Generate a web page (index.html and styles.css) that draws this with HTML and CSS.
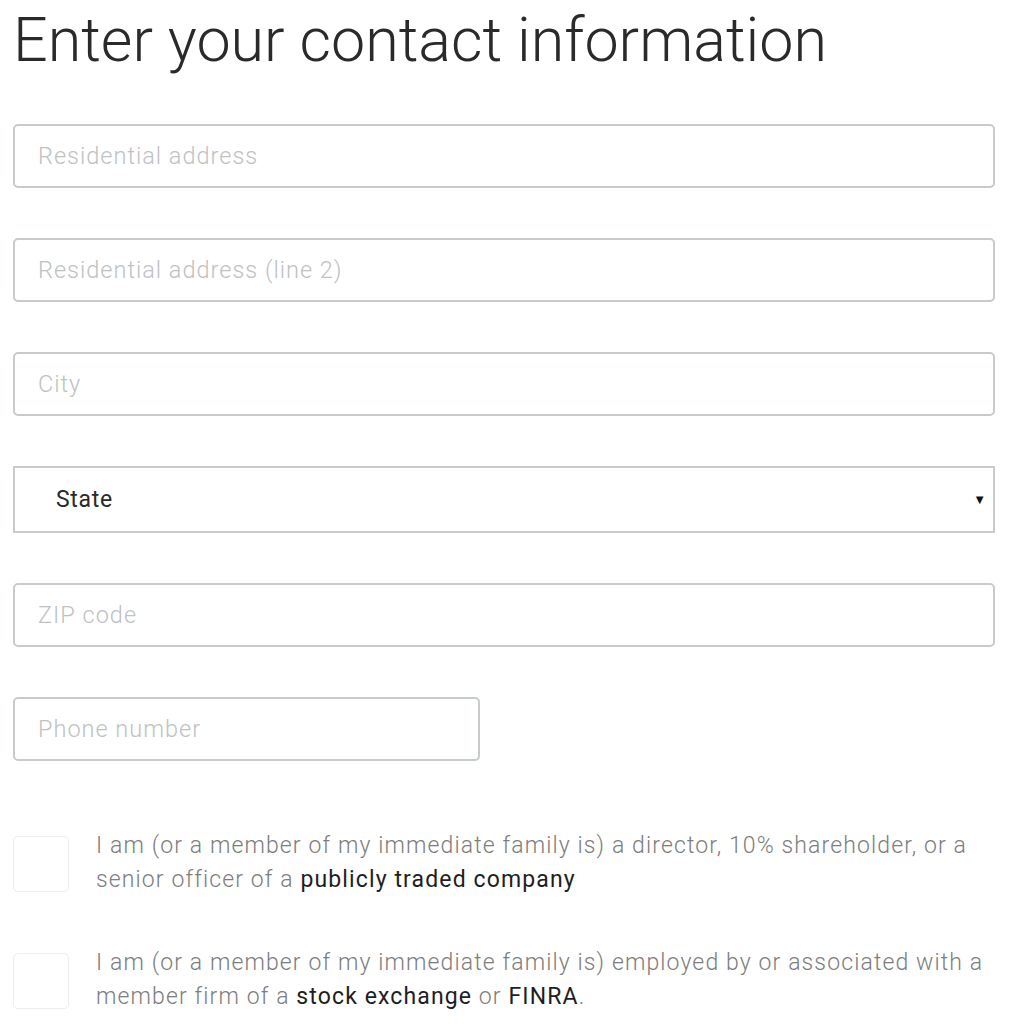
FILE: index.html
```html
<!DOCTYPE html>
<html lang="en">
<head>
<meta charset="utf-8">
<title>Contact information</title>
<link rel="stylesheet" href="styles.css">
</head>
<body>
<main class="page">
  <h1 class="title">Enter your contact information</h1>
  <form class="form">
    <input class="field" type="text" placeholder="Residential address">
    <input class="field" type="text" placeholder="Residential address (line 2)">
    <input class="field" type="text" placeholder="City">
    <div class="select">
      <span class="select-label">State</span>
      <span class="select-arrow">&#9660;</span>
    </div>
    <input class="field" type="text" placeholder="ZIP code">
    <input class="field field-short" type="text" placeholder="Phone number">

    <div class="checks">
      <label class="check">
        <span class="box"></span>
        <span class="check-text">I am (or a member of my immediate family is) a director, 10% shareholder, or a senior officer of a <span class="link">publicly traded company</span></span>
      </label>
      <label class="check">
        <span class="box"></span>
        <span class="check-text">I am (or a member of my immediate family is) employed by or associated with a member firm of a <span class="link">stock exchange</span> or <span class="link">FINRA</span>.</span>
      </label>
    </div>
  </form>
</main>
</body>
</html>
```

FILE: styles.css
```css
* { box-sizing: border-box; }
html, body { margin: 0; padding: 0; background: #fff; }
body {
  font-family: Roboto, "Liberation Sans", sans-serif;
  color: #222;
}
.page {
  padding: 0 23px 0 13px;
  width: 1018px;
}
.title {
  margin: 0;
  padding-top: 7px;
  font-weight: 300;
  font-size: 61px;
  line-height: 66px;
  letter-spacing: 0;
  color: #2a2a2a;
}
.form {
  display: flex;
  flex-direction: column;
  align-items: flex-start;
  gap: 50px;
  padding-top: 51px;
}
.field {
  width: 982px;
  height: 64px;
  border: 2px solid #c6cbcc;
  border-radius: 5px;
  padding: 0 0 0 23px;
  font-family: inherit;
  font-size: 23.5px;
  font-weight: 300;
  letter-spacing: 1px;
  color: #333;
  background: #fff;
  outline: none;
}
.field::placeholder { color: #bec2c2; }
.field-short { width: 467px; }
.select {
  width: 982px;
  height: 67px;
  border: 2px solid #c6cbcc;
  display: flex;
  align-items: center;
  justify-content: space-between;
  padding: 0 7px 0 41px;
  font-size: 23px;
  font-weight: 400;
  color: #2a2a2a;
}
.select-label { letter-spacing: 0.7px; }
.select-arrow { font-size: 13px; color: #111; }
.checks {
  display: flex;
  flex-direction: column;
  gap: 56px;
  padding-top: 25px;
  width: 100%;
}
.check {
  display: flex;
  align-items: flex-start;
  gap: 27px;
}
.box {
  flex: none;
  width: 56px;
  height: 56px;
  border: 1px solid #eceeee;
  border-radius: 5px;
}
.check-text {
  font-size: 23px;
  font-weight: 300;
  line-height: 34px;
  letter-spacing: 1.12px;
  color: #7d7d7d;
  margin-top: -7px;
  width: 895px;
}
.link { color: #1e1e1e; font-weight: 400; }
```
